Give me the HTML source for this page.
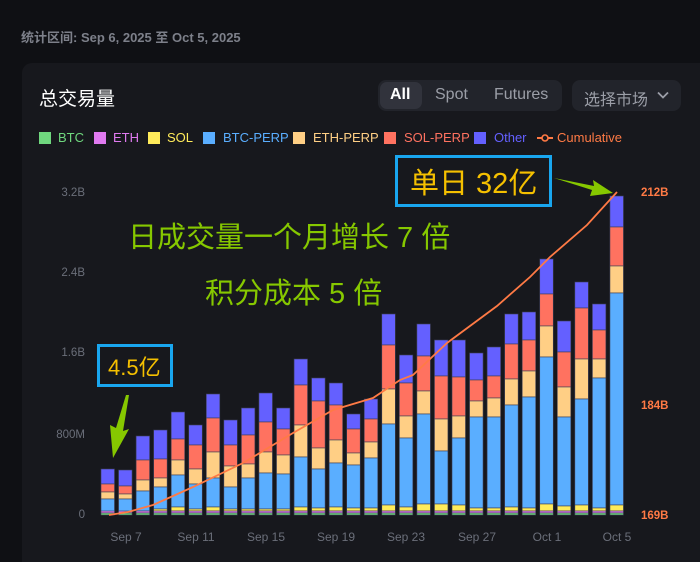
<!DOCTYPE html>
<html><head><meta charset="utf-8"><style>
html,body{margin:0;width:700px;height:562px;overflow:hidden}
body{background:#0f1014;font-family:"Liberation Sans","Noto Sans CJK SC",sans-serif;position:relative}
.date{position:absolute;left:21px;top:27px;font-size:13px;color:#7d808a;font-weight:bold}
.card{position:absolute;left:22px;top:63px;width:690px;height:510px;background:#17181d;border-radius:10px}
.t{position:absolute;left:39px;top:84px;font-size:19px;color:#fff}
.tabs{position:absolute;left:378px;top:80px;width:184px;height:31px;background:#22242b;border-radius:8px}
.tabs span{position:absolute;top:6px;font-size:16px;color:#9b9ea7}
.all{position:absolute;left:2px;top:2px;width:42px;height:27px;background:#31333c;border-radius:7px}
.sel{position:absolute;left:572px;top:80px;width:109px;height:31px;background:#22242b;border-radius:8px;color:#9b9ea7;font-size:16px}
.leg{position:absolute;top:130px;font-size:13px}
.sq{position:absolute;top:132px;width:12px;height:12px}
</style></head><body>
<div class="date">统计区间: Sep 6, 2025 至 Oct 5, 2025</div>
<div class="card"></div>
<div class="t">总交易量</div>
<div class="tabs"><div class="all"></div><span style="left:12px;color:#fff;font-weight:bold">All</span><span style="left:57px">Spot</span><span style="left:116px">Futures</span></div>
<div class="sel"><span style="position:absolute;left:12px;top:6px">选择市场</span><svg style="position:absolute;left:85px;top:11px" width="12" height="9"><path d="M1 1.5L6 6.5L11 1.5" stroke="#9b9ea7" stroke-width="1.8" fill="none"/></svg></div>
<div class="sq" style="left:39px;background:#6fd77e"></div><div class="leg" style="left:58px;color:#6fd77e">BTC</div>
<div class="sq" style="left:94px;background:#e07af0"></div><div class="leg" style="left:113px;color:#e07af0">ETH</div>
<div class="sq" style="left:148px;background:#ffeb5a"></div><div class="leg" style="left:167px;color:#ffeb5a">SOL</div>
<div class="sq" style="left:203px;background:#5aaeff"></div><div class="leg" style="left:223px;color:#5aaeff">BTC-PERP</div>
<div class="sq" style="left:293px;background:#ffcf85"></div><div class="leg" style="left:313px;color:#ffcf85">ETH-PERP</div>
<div class="sq" style="left:384px;background:#ff7260"></div><div class="leg" style="left:404px;color:#ff7260">SOL-PERP</div>
<div class="sq" style="left:474px;background:#6460ff"></div><div class="leg" style="left:494px;color:#6460ff">Other</div>
<svg style="position:absolute;left:537px;top:133px" width="16" height="10"><path d="M0 5H16" stroke="#ff7a45" stroke-width="2"/><circle cx="8" cy="5" r="3" fill="#17181d" stroke="#ff7a45" stroke-width="1.6"/></svg>
<div class="leg" style="left:557px;color:#ff7a45">Cumulative</div>
<svg id="ch" style="position:absolute;left:0;top:0" width="700" height="562" font-family="Liberation Sans, Noto Sans CJK SC, sans-serif">
<g font-size="11.5" fill="#6b6f7a" text-anchor="end">
<text x="85" y="196">3.2B</text><text x="85" y="276">2.4B</text><text x="85" y="356">1.6B</text><text x="85" y="438">800M</text><text x="85" y="518">0</text></g>
<g font-size="11.5" fill="#ff7a45" font-weight="bold"><text x="641" y="196">212B</text><text x="641" y="409">184B</text><text x="641" y="519">169B</text></g>
<g font-size="12" fill="#6b6f7a" text-anchor="middle"><text x="126" y="541">Sep 7</text><text x="196" y="541">Sep 11</text><text x="266" y="541">Sep 15</text><text x="336" y="541">Sep 19</text><text x="406" y="541">Sep 23</text><text x="477" y="541">Sep 27</text><text x="547" y="541">Oct 1</text><text x="617" y="541">Oct 5</text></g>
<g id="bars"></g>
<polyline fill="none" stroke="#ff7a45" stroke-width="1.8" points="109,515 128,512 153,505 193,487 243,463 293,433 333,410 373,398 400,380 413,375 447,343 497,306 530,277 550,257 587,225 617,192"/>
<g font-size="29" fill="#86c800"><text x="128" y="247">日成交量一个月增长 7 倍</text><text x="205" y="303">积分成本 5 倍</text></g>
<rect x="396.5" y="156.5" width="154" height="49" fill="none" stroke="#19a6ef" stroke-width="3"/>
<text x="410" y="193" font-size="29" fill="#f5c000">单日 32亿</text>
<rect x="98.5" y="345.5" width="73" height="40" fill="none" stroke="#19a6ef" stroke-width="3"/>
<text x="108" y="375" font-size="22" fill="#f5c000">4.5亿</text>
<path d="M554 178L594 186L593 180L613 193L590 196L592 190Z" fill="#86c800"/>
<path d="M129 395L123 431L129 429L113 458L110 425L116 428L126 395Z" fill="#86c800"/>
</svg>
<script>
var d=[[469,484,492,499,512],[470,486,494,499,512],[436,460,480,491,511],[430,459,478,487,509],[412,439,460,475,507],[425,445,469,484,509],[394,418,452,478,507],[420,445,466,487,509],[408,435,464,478,509],[393,422,452,473,509],[408,429,455,474,509],[359,385,425,457,507],[378,401,448,469,508],[383,405,440,463,507],[414,429,453,465,508],[399,419,442,458,508],[314,345,389,424,505],[355,383,416,438,507],[324,356,391,414,504],[340,376,419,451,504],[340,377,416,438,505],[353,380,401,417,508],[347,376,398,417,508],[314,344,379,405,507],[312,340,371,397,508],[259,294,326,357,504],[321,352,387,417,506],[282,308,359,399,505],[304,330,359,378,508],[196,227,266,293,505]];
var c=["#6460ff","#ff7260","#ffcf85","#5aaeff","#ffeb5a"],h="";
d.forEach(function(b,i){var x=101+i*17.55;var ys=b.concat([511,513,515]);var cols=c.concat(["#e07af0","#6fd77e"]);
for(var k=0;k<7;k++){var y0=ys[k],y1=ys[k+1];h+='<rect x="'+x+'" y="'+y0+'" width="13.5" height="'+(y1-y0)+'" fill="'+cols[k]+'" stroke="#3c3e55" stroke-width="0.6"/>';}});
document.getElementById("bars").innerHTML=h;
</script>
</body></html>
